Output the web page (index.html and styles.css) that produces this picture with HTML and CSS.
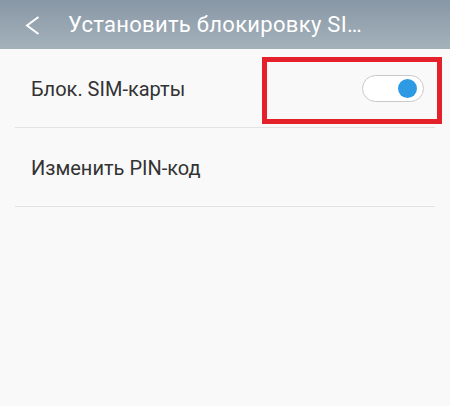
FILE: index.html
```html
<!DOCTYPE html>
<html lang="ru">
<head>
  <meta charset="UTF-8"/>
  <meta name="viewport" content="width=device-width, initial-scale=1.0"/>
  <title>Установить блокировку SIM-карты</title>
  <link rel="stylesheet" href="styles.css">
</head>
<body>
  <!-- HEADER -->
  <div class="header">
    <svg class="back" width="15" height="19" viewBox="0 0 15 19">
      <path d="M13.5 1 L2 9.5 L13.5 18" fill="none" stroke="#fff" stroke-width="2"/>
    </svg>
    <div class="title">Установить блокировку SI…</div>
  </div>

  <!-- LIST -->
  <div class="list">
    <div class="row">
      <div class="label">Блок. SIM-карты</div>
      <div class="switch"><div class="knob"></div></div>
    </div>
    <div class="row">
      <div class="label">Изменить PIN-код</div>
    </div>
  </div>

  <!-- рамка-выделение поверх переключателя -->
  <div class="highlight"></div>
</body>
</html>
```

FILE: styles.css
```css
body {
  margin: 0;
  padding: 0;
  font-family: Roboto, "Noto Sans", sans-serif;
  background: #f9f9f9;
  width: 450px;
  height: 406px;
  overflow: hidden;
  position: relative;
}
/* HEADER */
.header {
  height: 49px;
  display: flex;
  align-items: center;
  background: linear-gradient(to bottom, #8897a5, #a4b2bb);
  color: #fff;
}
.back {
  margin-left: 25px;
  margin-right: 28px;
  margin-top: 1px;
}
.title {
  font-size: 22px;
  white-space: nowrap;
  letter-spacing: 0.3px;
}
/* LIST */
.list {
  margin: 0 15px;
}
.row {
  height: 78px;
  border-bottom: 1px solid #e2e2e2;
  display: flex;
  align-items: center;
  justify-content: space-between;
  padding: 0 11px 0 16px;
}
.label {
  font-size: 20px;
  color: #333;
  margin-top: 2px;
}
.switch {
  width: 54px;
  height: 25px;
  border: 1px solid #c9c9c9;
  border-radius: 14px;
  background: #fff;
  display: flex;
  align-items: center;
  justify-content: flex-end;
  padding-right: 6px;
  box-sizing: content-box;
  margin-top: 1px;
}
.knob {
  width: 19px;
  height: 19px;
  border-radius: 50%;
  background: #2e9ae4;
}
/* Annotation */
.highlight {
  position: absolute;
  left: 262px;
  top: 57px;
  width: 170px;
  height: 57px;
  border: 5px solid #e4202b;
}
```
